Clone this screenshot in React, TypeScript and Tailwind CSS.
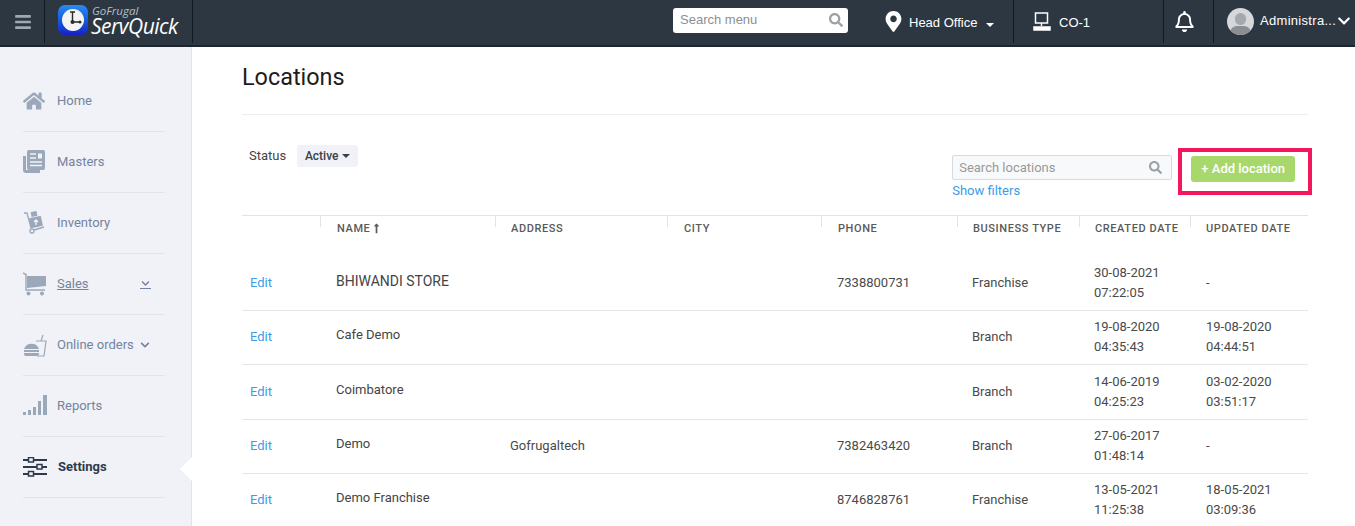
import { FaBars, FaChevronDown, FaHome, FaLongArrowAltUp, FaMapMarkerAlt, FaRegBell, FaSearch } from "react-icons/fa"

const rows = [
  { name: "BHIWANDI STORE", nameSize: "text-[14px]", address: "", phone: "7338800731", type: "Franchise", created: ["30-08-2021", "07:22:05"], updated: ["-"], h: "h-[70px]" },
  { name: "Cafe Demo", nameSize: "", address: "", phone: "", type: "Branch", created: ["19-08-2020", "04:35:43"], updated: ["19-08-2020", "04:44:51"], h: "h-[54px]" },
  { name: "Coimbatore", nameSize: "", address: "", phone: "", type: "Branch", created: ["14-06-2019", "04:25:23"], updated: ["03-02-2020", "03:51:17"], h: "h-[55px]" },
  { name: "Demo", nameSize: "", address: "Gofrugaltech", phone: "7382463420", type: "Branch", created: ["27-06-2017", "01:48:14"], updated: ["-"], h: "h-[54px]" },
  { name: "Demo Franchise", nameSize: "", address: "", phone: "8746828761", type: "Franchise", created: ["13-05-2021", "11:25:38"], updated: ["18-05-2021", "03:09:36"], h: "h-[54px]" },
]

const columns = [
  { label: "", pad: "" },
  { label: "NAME", pad: "pl-[17px]" },
  { label: "ADDRESS", pad: "pl-[16px]" },
  { label: "CITY", pad: "pl-[17px]" },
  { label: "PHONE", pad: "pl-[17px]" },
  { label: "BUSINESS TYPE", pad: "pl-[16px]" },
  { label: "CREATED DATE", pad: "pl-[16px]" },
  { label: "UPDATED DATE", pad: "pl-[16px]" },
]

const gridCols = "grid grid-cols-[78px_175px_172px_154px_136px_122px_111px_118px]"

function MastersIcon() {
  return (
    <svg width="22" height="24" viewBox="0 0 22 24" className="text-[#9aa8ba]">
      <path d="M0 6h3v14h14v3H3a3 3 0 0 1-3-3z" fill="currentColor" />
      <rect x="4" y="0" width="18" height="20" rx="2" fill="currentColor" />
      <path d="M7 4h6M7 8h6M7 12h12M7 15.500h12" stroke="#f0f2f7" strokeWidth="1.500" />
      <rect x="15" y="3.500" width="4" height="5" fill="#f0f2f7" />
    </svg>
  )
}

function InventoryIcon() {
  return (
    <svg width="22" height="24" viewBox="0 0 22 24" fill="none" className="text-[#9aa8ba]">
      <path d="M1 2h3l4 15" stroke="currentColor" strokeWidth="1.300" />
      <circle cx="9" cy="20" r="2" stroke="currentColor" strokeWidth="1.300" />
      <path d="M11 19l10-3" stroke="currentColor" strokeWidth="1.500" />
      <rect x="7" y="6" width="12" height="10" fill="currentColor" transform="rotate(-12 13 11)" />
      <rect x="8" y="0.500" width="6" height="5" fill="currentColor" transform="rotate(-12 11 3)" />
      <path d="M13 14V9m-2 2l2-2 2 2" stroke="#f0f2f7" strokeWidth="1.300" />
    </svg>
  )
}

function CartIcon() {
  return (
    <svg width="23" height="24" viewBox="0 0 23 24" fill="none" className="text-[#9aa8ba]">
      <path d="M0 1l3 1.500V18h19" stroke="currentColor" strokeWidth="1.400" />
      <path d="M4 4h19v10L4 16z" fill="currentColor" />
      <circle cx="5.500" cy="21.500" r="2" fill="currentColor" />
      <circle cx="19" cy="21.500" r="2" fill="currentColor" />
    </svg>
  )
}

function OrdersIcon() {
  return (
    <svg width="24" height="24" viewBox="0 0 24 24" fill="none" className="text-[#9aa8ba]">
      <path d="M13 8h10l-2 15h-7" stroke="currentColor" strokeWidth="1.200" />
      <path d="M18 8l2-6" stroke="currentColor" strokeWidth="1.200" />
      <path d="M1 16a8 8 0 0 1 15 0z" fill="currentColor" />
      <rect x="1" y="17" width="15" height="2" fill="currentColor" />
      <path d="M1 20h15v1a2 2 0 0 1-2 2H3a2 2 0 0 1-2-2z" fill="currentColor" />
    </svg>
  )
}

function ReportsIcon() {
  return (
    <svg width="24" height="21" viewBox="0 0 24 21" fill="#9aa8ba">
      <rect x="0" y="17" width="3" height="3" />
      <rect x="5" y="15" width="3" height="5" />
      <rect x="10" y="12" width="3" height="8" />
      <rect x="15" y="6" width="3" height="14" />
      <rect x="20" y="0" width="4" height="20" />
    </svg>
  )
}

function SettingsIcon() {
  return (
    <svg width="24" height="20" viewBox="0 0 24 20" fill="none" stroke="#2d3a4c">
      <path d="M0 3h24M0 10h24M0 17h24" strokeWidth="2" />
      <rect x="5.500" y="0.500" width="5" height="4.500" fill="#f0f2f7" strokeWidth="1.500" />
      <rect x="14" y="7.500" width="5" height="4.500" fill="#f0f2f7" strokeWidth="1.500" />
      <rect x="5.500" y="14.500" width="5" height="4.500" fill="#f0f2f7" strokeWidth="1.500" />
    </svg>
  )
}

function NavItem({ icon, label, active, underline, chevron }: { icon: React.ReactNode; label: string; active?: boolean; underline?: boolean; chevron?: React.ReactNode }) {
  return (
    <div className="relative flex h-[61px] items-center border-b border-[#e1e4ea] pb-[1px]">
      <div className="flex w-[34px] items-center">{icon}</div>
      <span className={`text-[13px] ${active ? "ml-[1px] font-bold text-[#2d3a4c]" : "text-[#74849f]"} ${underline ? "underline" : ""}`}>{label}</span>
      {chevron}
    </div>
  )
}

function Sidebar() {
  return (
    <aside className="relative h-[479px] w-[192px] shrink-0 border-r border-[#e1e4ea] bg-[#f0f2f7] pl-[23px] pr-[26px] pt-[24px]" style={{ fontFamily: "Roboto, sans-serif" }}>
      <NavItem icon={<FaHome className="text-[22px] text-[#9aa8ba]" />} label="Home" />
      <NavItem icon={<MastersIcon />} label="Masters" />
      <NavItem icon={<InventoryIcon />} label="Inventory" />
      <NavItem
        icon={<CartIcon />}
        label="Sales"
        underline
        chevron={
          <span className="ml-[51px] flex flex-col items-center border-b border-[#74849f] px-[1px]">
            <FaChevronDown className="text-[9px] text-[#74849f]" />
          </span>
        }
      />
      <NavItem icon={<OrdersIcon />} label="Online orders" chevron={<FaChevronDown className="ml-[6px] text-[10px] text-[#74849f]" />} />
      <NavItem icon={<ReportsIcon />} label="Reports" />
      <NavItem icon={<SettingsIcon />} label="Settings" active />
      <div className="absolute right-[-1px] top-[410px] h-[24px] w-[12px] bg-white [clip-path:polygon(100%_0,0_50%,100%_100%)]" />
    </aside>
  )
}

function Logo() {
  return (
    <div className="flex w-[147px] items-center pb-[3px] pl-[13px]">
      <div className="flex h-[30px] w-[30px] items-center justify-center rounded-[7px] bg-gradient-to-b from-[#2a8bf0] to-[#1a1ac8]">
        <svg width="24" height="24" viewBox="0 0 24 24">
          <circle cx="12" cy="12" r="11" fill="#f4f4f4" />
          <path d="M9 4h5M11.500 4v10H18" stroke="#2b2b2b" strokeWidth="1.400" fill="none" />
          <circle cx="11.500" cy="14" r="2" fill="#2b2b2b" />
          <circle cx="19" cy="14" r="1.500" fill="#2b2b2b" />
        </svg>
      </div>
      <div className="ml-[3px] flex flex-col italic text-white" style={{ fontFamily: "'Open Sans', sans-serif" }}>
        <span className="ml-[1px] h-[12px] text-[11.500px] leading-[18px] text-[#b8bec6]">GoFrugal</span>
        <span className="h-[24px] text-[21px] leading-[24px] tracking-[-0.5px]">ServQuick</span>
      </div>
    </div>
  )
}

function Header() {
  return (
    <header className="flex h-[47px] border-b-2 border-[#1d252e] bg-[#2d3742] pb-[2px] text-white" style={{ fontFamily: "'Liberation Sans', sans-serif" }}>
      <div className="flex w-[45px] items-center justify-center border-r border-[#14191f] pl-[1px]">
        <FaBars className="text-[18px] text-[#a0a8b2]" />
      </div>
      <Logo />
      <div className="w-[481px] border-l border-[#14191f]" />
      <div className="flex w-[175px] items-center justify-start pb-[3px]">
        <div className="flex h-[25px] w-[175px] items-center justify-between rounded-[3px] bg-white pl-[7px] pr-[3px] text-[13px] text-[#8b8f94]">
          <span>Search menu</span>
          <FaSearch className="mr-[2px] text-[14px] text-[#9aa0a6]" />
        </div>
      </div>
      <div className="flex w-[165px] items-center pl-[35px]">
        <FaMapMarkerAlt className="text-[21px]" />
        <span className="ml-[5px] mt-[2px] text-[13px]">Head Office</span>
        <span className="ml-[9px] mt-[6px] h-0 w-0 border-x-[4px] border-t-[4px] border-x-transparent border-t-white" />
      </div>
      <div className="flex w-[150px] items-center border-l border-[#14191f] pl-[19px]">
        <svg width="18" height="19" viewBox="0 0 18 19" fill="none" stroke="white" strokeWidth="1.500">
          <rect x="2.500" y="1" width="12" height="10" />
          <path d="M8.500 11v3" />
          <path d="M1 15h16v3H1z" fill="white" />
        </svg>
        <span className="ml-[8px] mt-[2px] text-[13px]">CO-1</span>
      </div>
      <div className="flex w-[50px] items-center justify-center border-l border-[#14191f] pr-[8px]">
        <FaRegBell className="text-[21px]" />
      </div>
      <div className="flex w-[142px] items-center border-l border-[#14191f] pl-[13px]">
        <div className="relative h-[27px] w-[27px] overflow-hidden rounded-full bg-[#d5d7da]">
          <div className="absolute left-[8px] top-[5px] h-[12px] w-[11px] rounded-full bg-[#a5a9ad]" />
          <div className="absolute left-[3px] top-[18px] h-[14px] w-[21px] rounded-full bg-[#8a8f94]" />
        </div>
        <span className="mb-[2px] ml-[6px] text-[13px] tracking-[0.3px]">Administra...</span>
        <FaChevronDown className="ml-[1px] mb-[2px] shrink-0 text-[14px]" />
      </div>
    </header>
  )
}

function Table() {
  return (
    <div className="border-t border-[#dfe3ea]">
      <div className={gridCols}>
        {columns.map((col, i) => (
          <div key={i} className={`relative h-[25px] ${col.pad}`}>
            {i > 0 && <div className="absolute left-0 top-0 h-[11px] w-px bg-[#dfe3ea]" />}
            <span className="flex items-center pt-[6px] text-[11px] font-medium leading-[13px] tracking-[0.6px] text-[#5a5a5a]">
              {col.label}
              {col.label === "NAME" && <FaLongArrowAltUp className="ml-[1px] text-[11px]" />}
            </span>
          </div>
        ))}
      </div>
      {rows.map((row) => (
        <div key={row.name} className={`${gridCols} ${row.h} items-end border-b border-[#e4e6eb] pb-[7px] text-[13px] leading-[20px] text-[#4a4a4a] last:border-transparent`}>
          <a className="pb-[10px] pl-[8px] text-[#3d9be9]">Edit</a>
          <span className={`pb-[12px] pl-[16px] text-[#444] ${row.nameSize}`}>{row.name}</span>
          <span className="pb-[10px] pl-[15px]">{row.address}</span>
          <span />
          <span className="pb-[10px] pl-[16px]">{row.phone}</span>
          <span className="pb-[10px] pl-[15px]">{row.type}</span>
          <span className={`pl-[15px] ${row.created.length === 1 ? "pb-[10px]" : ""}`}>{row.created.map((t) => <div key={t}>{t}</div>)}</span>
          <span className={`pl-[16px] ${row.updated.length === 1 ? "pb-[10px]" : ""}`}>{row.updated.map((t) => <div key={t}>{t}</div>)}</span>
        </div>
      ))}
    </div>
  )
}

export default function App() {
  return (
    <div className="h-[526px] w-[1355px] overflow-hidden bg-white">
      <Header />
      <div className="flex">
        <Sidebar />
        <main className="w-[1066px] pl-[50px] box-content" style={{ fontFamily: "Roboto, sans-serif" }}>
          <div className="w-[1066px]">
            <h1 className="h-[68px] border-b border-[#eceef1] pt-[14px] text-[23.400px] leading-[32px] text-[#1d1d1d]">Locations</h1>
            <div className="flex h-[100px] items-start">
              <div className="flex items-center pl-[7px] pt-[30px] text-[13px] text-[#444]">
                <span>Status</span>
                <span className="ml-[11px] flex h-[22px] w-[61px] items-center justify-center rounded-[3px] bg-[#f0f2f7] text-[12px] font-medium text-[#3b3f46]">
                  Active
                  <span className="ml-[4px] h-0 w-0 border-x-[4px] border-t-[4px] border-x-transparent border-t-[#3b3f46]" />
                </span>
              </div>
              <div className="ml-[594px] pt-[40px]">
                <div className="flex h-[25px] w-[220px] items-center justify-between rounded-[2px] border border-[#d5dbe3] bg-[#f8f9fa] pl-[6px] pr-[9px] text-[13px] text-[#999]">
                  <span>Search locations</span>
                  <FaSearch className="text-[13px] text-[#98a0a8]" />
                </div>
                <a className="mt-[2px] block text-[13px] leading-[18px] text-[#3d9be9]">Show filters</a>
              </div>
              <div className="ml-[6px] mt-[33px] flex h-[47px] w-[134px] shrink-0 items-start justify-start border-[4px] border-[#f4175e] pl-[9px] pt-[4px]">
                <button className="h-[26px] w-[104px] rounded-[3px] bg-[#a8d86c] text-[13px] font-medium text-white">+ Add location</button>
              </div>
            </div>
            <Table />
          </div>
        </main>
      </div>
    </div>
  )
}
